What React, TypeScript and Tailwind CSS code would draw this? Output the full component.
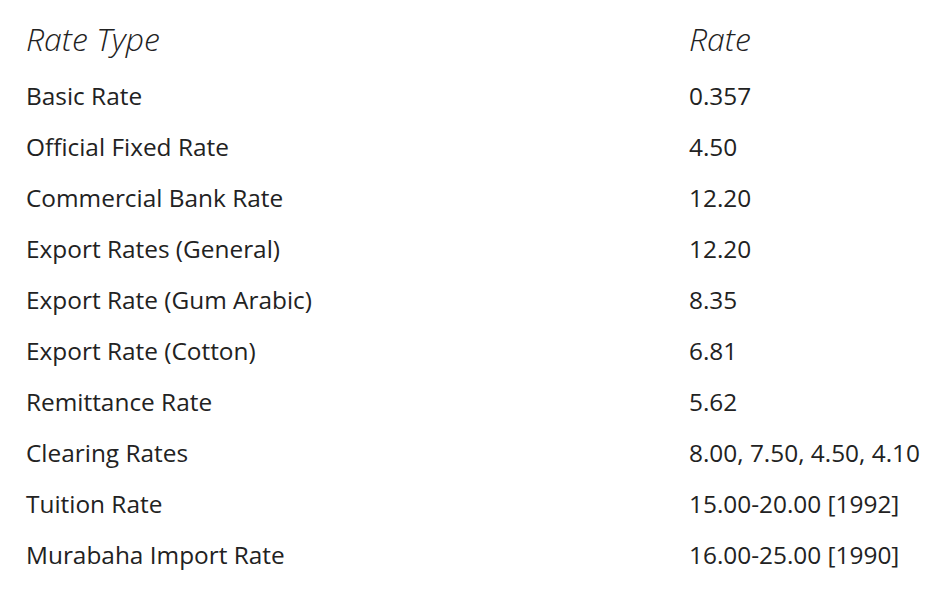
const ROWS: [string, string][] = [
  ['Basic Rate', '0.357'],
  ['Official Fixed Rate', '4.50'],
  ['Commercial Bank Rate', '12.20'],
  ['Export Rates (General)', '12.20'],
  ['Export Rate (Gum Arabic)', '8.35'],
  ['Export Rate (Cotton)', '6.81'],
  ['Remittance Rate', '5.62'],
  ['Clearing Rates', '8.00, 7.50, 4.50, 4.10'],
  ['Tuition Rate', '15.00-20.00 [1992]'],
  ['Murabaha Import Rate', '16.00-25.00 [1990]'],
];

export default function App() {
  return (
    <div className="w-[949px] h-[615px] bg-white text-[#222] font-['Open_Sans',sans-serif]">
      <div className="pl-[26px] pt-[6px]">
        <div className="grid grid-cols-[663px_1fr] h-[65px] items-center">
          <div className="text-[32px] font-light italic">Rate Type</div>
          <div className="text-[32px] font-light italic">Rate</div>
        </div>
        {ROWS.map(([type, rate]) => (
          <div key={type} className="grid grid-cols-[663px_1fr] h-[51px] items-center text-[24.4px]">
            <div>{type}</div>
            <div>{rate}</div>
          </div>
        ))}
      </div>
    </div>
  );
}
